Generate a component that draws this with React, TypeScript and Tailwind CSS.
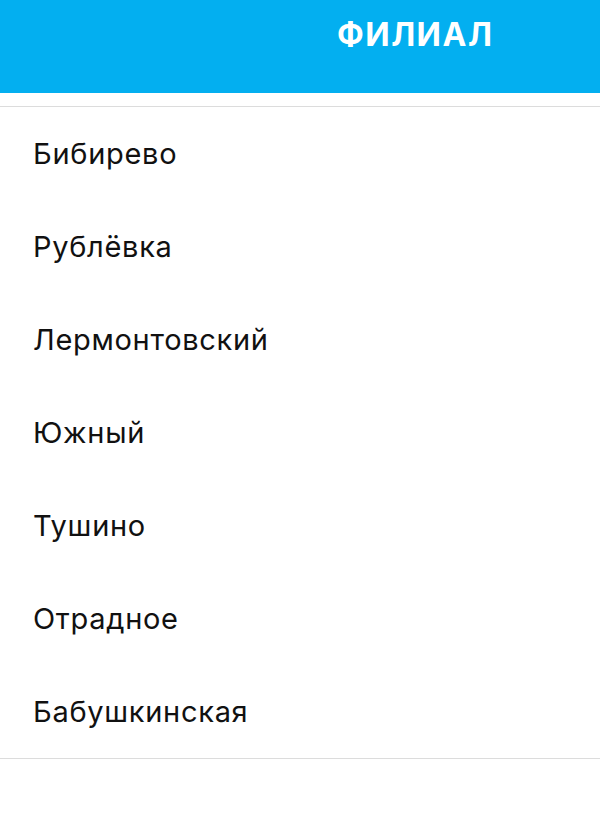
const branches = [
  "Бибирево",
  "Рублёвка",
  "Лермонтовский",
  "Южный",
  "Тушино",
  "Отрадное",
  "Бабушкинская",
];

export default function App() {
  return (
    <div className="min-h-screen bg-white font-['Inter',sans-serif]">
      <header className="h-[93px] bg-[#03aff0] pl-[337px] pt-[19px]">
        <h1 className="text-[32px] font-bold leading-none tracking-[1.5px] text-white">ФИЛИАЛ</h1>
      </header>

      <ul className="mt-[13px] border-y border-[#dcdcdc]">
        {branches.map((name) => (
          <li
            key={name}
            className="flex h-[93px] items-center pl-[33px] text-[29px] tracking-[0.7px] text-[#111]"
          >
            {name}
          </li>
        ))}
      </ul>
    </div>
  );
}
